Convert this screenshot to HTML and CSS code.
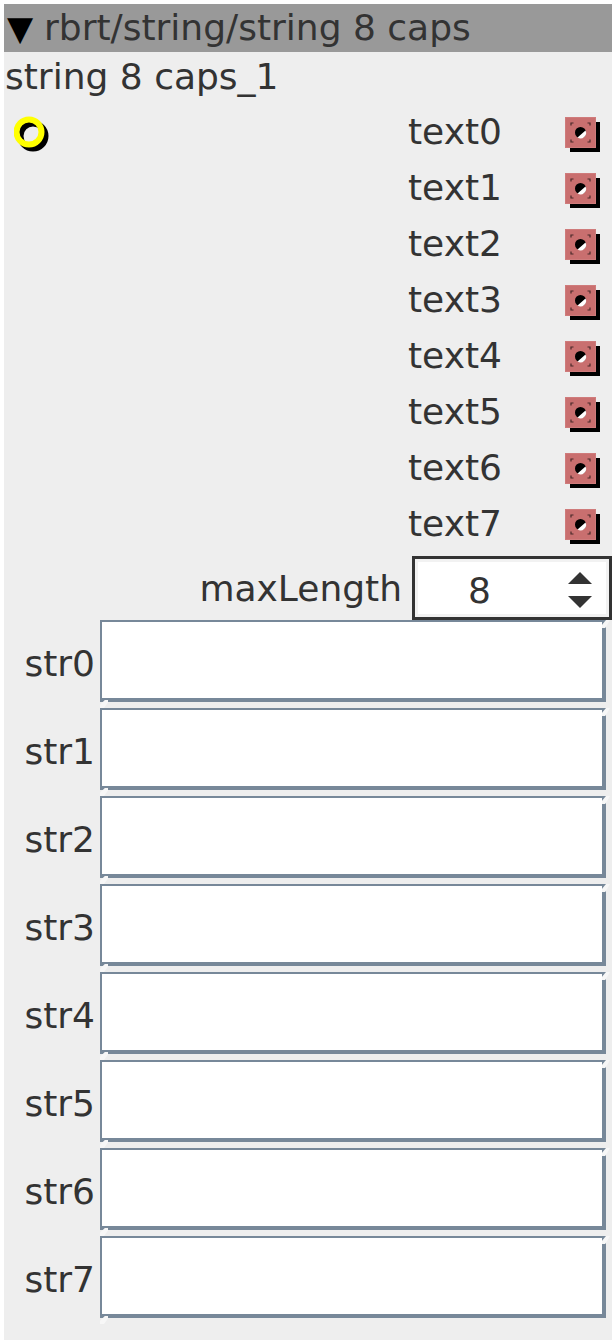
FILE: index.html
```html
<!DOCTYPE html>
<html lang="en">
<head>
    <meta charset="UTF-8">
    <title>rbrt/string/string 8 caps</title>
    <link rel="stylesheet" href="styles.css">
</head>
<body>
    <svg class="defs" width="0" height="0">
        <symbol id="cap" viewBox="0 0 36 36">
            <rect x="5" y="5" width="30" height="30" fill="#000"/>
            <rect x="0.5" y="0.5" width="30" height="30" fill="#c96f6f" stroke="#cf7b7b" stroke-width="1"/>
            <path d="M6 8.5V6H8.5M22.5 6H25V8.5M25 22.5V25H22.5M8.5 25H6V22.5" fill="none" stroke="#4a2a2a" stroke-width="1.2"/>
            <circle cx="15.5" cy="15.5" r="5.5" fill="#000"/>
            <path d="M20.5 13.5A5.5 5.5 0 0 1 12.5 20.5Z" fill="#fff"/>
        </symbol>
    </svg>

    <div class="node">
        <div class="node-header"><span class="arrow">▼</span><span class="node-title">rbrt/string/string 8 caps</span></div>
        <div class="node-name">string 8 caps_1</div>

        <div class="ports">
            <div class="input-port">
                <svg width="38" height="38" viewBox="0 0 38 38">
                    <circle cx="19" cy="20" r="12.5" fill="none" stroke="#000" stroke-width="6"/>
                    <circle cx="15" cy="16" r="12.5" fill="none" stroke="#ff0" stroke-width="6"/>
                </svg>
            </div>
            <div class="outputs">
                <div class="output"><span>text0</span><svg class="cap"><use href="#cap"/></svg></div>
                <div class="output"><span>text1</span><svg class="cap"><use href="#cap"/></svg></div>
                <div class="output"><span>text2</span><svg class="cap"><use href="#cap"/></svg></div>
                <div class="output"><span>text3</span><svg class="cap"><use href="#cap"/></svg></div>
                <div class="output"><span>text4</span><svg class="cap"><use href="#cap"/></svg></div>
                <div class="output"><span>text5</span><svg class="cap"><use href="#cap"/></svg></div>
                <div class="output"><span>text6</span><svg class="cap"><use href="#cap"/></svg></div>
                <div class="output"><span>text7</span><svg class="cap"><use href="#cap"/></svg></div>
            </div>
        </div>

        <div class="spin-row">
            <label class="spin-label">maxLength</label>
            <div class="spinner">
                <span class="spin-value">8</span>
                <span class="spin-arrows"><i class="up"></i><i class="down"></i></span>
            </div>
        </div>

        <div class="fields">
            <div class="field"><label>str0</label><div class="entry"></div></div>
            <div class="field"><label>str1</label><div class="entry"></div></div>
            <div class="field"><label>str2</label><div class="entry"></div></div>
            <div class="field"><label>str3</label><div class="entry"></div></div>
            <div class="field"><label>str4</label><div class="entry"></div></div>
            <div class="field"><label>str5</label><div class="entry"></div></div>
            <div class="field"><label>str6</label><div class="entry"></div></div>
            <div class="field"><label>str7</label><div class="entry"></div></div>
        </div>
    </div>
</body>
</html>
```

FILE: styles.css
```css
body {
    margin: 0;
    padding: 4px 4px 4px 4px;
    background-color: #fff;
    font-family: "DejaVu Sans", sans-serif;
    font-size: 36px;
    color: #333;
}

.defs {
    position: absolute;
}

.node {
    width: 608px;
    height: 1336px;
    background-color: #eee;
}

.node-header {
    height: 48px;
    line-height: 48px;
    background-color: #999;
    white-space: nowrap;
    display: flex;
}

.arrow {
    width: 40px;
    padding-left: 3px;
    box-sizing: border-box;
    color: #000;
    font-size: 34px;
}

.node-name {
    height: 52px;
    line-height: 50px;
    padding-left: 1px;
}

.ports {
    display: flex;
    justify-content: space-between;
}

.input-port {
    padding: 12px 0 0 10px;
}

.outputs {
    width: 204px;
}

.output {
    height: 56px;
    display: flex;
    justify-content: space-between;
    line-height: 56px;
}

.cap {
    width: 36px;
    height: 36px;
    margin: 13px 11px 0 0;
}

.spin-row {
    height: 64px;
    margin-top: 4px;
    display: flex;
    justify-content: flex-end;
    align-items: center;
}

.spin-label {
    margin-right: 10px;
}

.spinner {
    width: 200px;
    height: 64px;
    box-sizing: border-box;
    border: 3px solid #333;
    background-color: #fff;
    box-shadow: inset 0 0 0 3px #f2f2f2;
    display: flex;
    align-items: center;
    justify-content: space-between;
    padding: 4px 17px 0 53px;
}

.spin-arrows {
    display: flex;
    flex-direction: column;
    gap: 12px;
}

.spin-arrows i {
    display: block;
    width: 0;
    height: 0;
    border-left: 12px solid transparent;
    border-right: 12px solid transparent;
}

.spin-arrows .up {
    border-bottom: 12px solid #333;
}

.spin-arrows .down {
    border-top: 12px solid #333;
}

.field {
    height: 88px;
    display: flex;
    align-items: flex-start;
}

.field label {
    width: 96px;
    box-sizing: border-box;
    padding: 0 5px 0 0;
    text-align: right;
    line-height: 88px;
}

.entry {
    position: relative;
    width: 506px;
    height: 82px;
    box-sizing: border-box;
    background-color: #fff;
    border-style: solid;
    border-color: #778899;
    border-width: 2px 4px 4px 2px;
}

/* the light mitred corners */
.entry::before,
.entry::after {
    content: "";
    position: absolute;
    width: 8px;
    height: 8px;
    background-color: #f7f7f7;
}

.entry::before {
    top: -2px;
    right: -8px;
    clip-path: polygon(100% 0, 50% 0, 0 60%, 0 100%, 40% 100%);
}

.entry::after {
    bottom: -10px;
    left: -2px;
    clip-path: polygon(0 100%, 50% 100%, 100% 30%, 100% 0, 60% 0, 0 60%);
}
```
